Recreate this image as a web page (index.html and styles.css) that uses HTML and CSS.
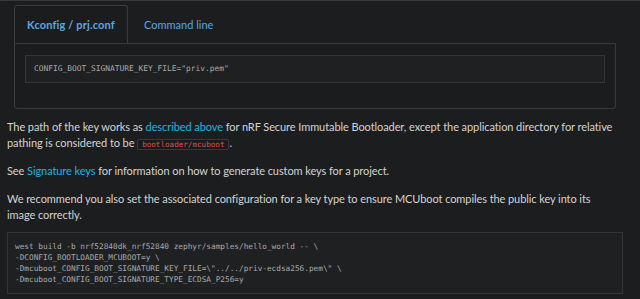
FILE: index.html
```html
<!DOCTYPE html>
<html>
<head>
<meta charset="utf-8">
<link rel="stylesheet" href="styles.css">
</head>
<body>
<div class="page">
  <div class="tabs">
    <div class="tab-list">
      <div class="tab active">Kconfig / prj.conf</div>
      <div class="tab">Command line</div>
    </div>
    <div class="tab-panel">
      <pre class="code small">CONFIG_BOOT_SIGNATURE_KEY_FILE="priv.pem"</pre>
    </div>
  </div>
  <p class="text first">The path of the key works as <a class="link">described above</a> for nRF Secure Immutable Bootloader, except the application directory for relative pathing is considered to be <code class="inline">bootloader/mcuboot</code>.</p>
  <p class="text">See <a class="link">Signature keys</a> for information on how to generate custom keys for a project.</p>
  <p class="text">We recommend you also set the associated configuration for a key type to ensure MCUboot compiles the public key into its<br>image correctly.</p>
  <pre class="code block">west build -b nrf52840dk_nrf52840 zephyr/samples/hello_world -- \
-DCONFIG_BOOTLOADER_MCUBOOT=y \
-Dmcuboot_CONFIG_BOOT_SIGNATURE_KEY_FILE=\"../../priv-ecdsa256.pem\" \
-Dmcuboot_CONFIG_BOOT_SIGNATURE_TYPE_ECDSA_P256=y</pre>
</div>
</body>
</html>
```
FILE: styles.css
```css
html, body {
  margin: 0;
  padding: 0;
  background: #1c1d1f;
}
body {
  border-top: 1px solid #38393b;
  height: 298px;
  overflow: hidden;
}
.page {
  padding: 4px 17px 0 7px;
  font-family: Lato, sans-serif;
  color: #d4d4d4;
}
.tabs {
  margin: 0 7px 0 7px;
}
.tab-list {
  display: flex;
  height: 38px;
  font-family: Lato, sans-serif;
  font-size: 11px;
  color: #5fa6e0;
}
.tab {
  display: flex;
  align-items: center;
  padding: 0 15px 0 15px;
  border: 1px solid transparent;
  border-bottom: none;
}
.tab.active {
  box-sizing: border-box;
  width: 114px;
  justify-content: center;
  padding: 0;
  font-weight: bold;
  letter-spacing: 0.15px;
  border-color: #3a3b3e;
  border-radius: 3px 3px 0 0;
  background: #1b1c1e;
}
.tab-panel {
  border: 1px solid #3a3b3e;
  border-radius: 0 0 3px 3px;
  padding: 11px 10px 25px 10px;
  background: #1b1c1e;
}
.code {
  margin: 0;
  font-family: "DejaVu Sans Mono", monospace;
  color: #a9a9a9;
  background: #1f2022;
  border: 1px solid #343538;
}
.code.small {
  font-size: 7.9px;
  line-height: 26px;
  padding: 0 8px;
}
.text {
  margin: 12px 0 0 0;
  font-size: 11px;
  letter-spacing: -0.08px;
  line-height: 16px;
}
.text.first {
  margin-top: 10px;
}
.link {
  color: #26b3e0;
}
.inline {
  display: inline-block;
  font-family: "DejaVu Sans Mono", monospace;
  font-size: 7.6px;
  letter-spacing: 0;
  line-height: 9px;
  color: #d9554f;
  background: #1a1a1b;
  border: 1px solid #38393b;
  border-radius: 2px;
  padding: 0 4px;
  vertical-align: 0px;
}
.code.block {
  margin-top: 9px;
  font-size: 7.75px;
  line-height: 11px;
  padding: 8px 7px 8px 7px;
}
```
